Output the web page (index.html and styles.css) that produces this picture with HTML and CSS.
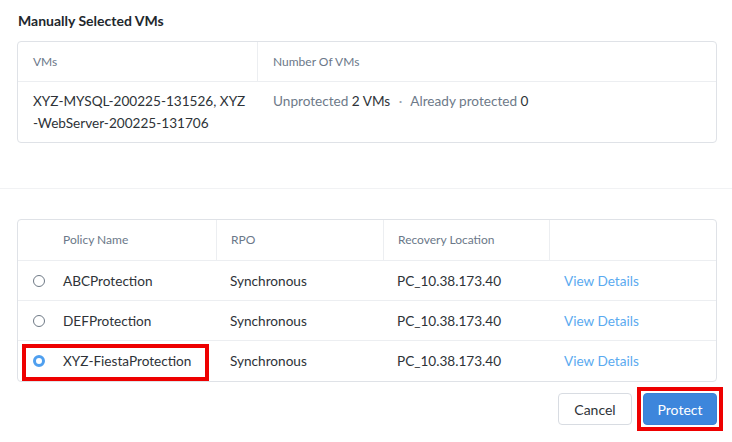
FILE: index.html
```html
<!DOCTYPE html>
<html>
<head>
<meta charset="utf-8">
<link rel="stylesheet" href="styles.css">
</head>
<body>
<div class="page">
  <section class="vms">
    <h2 class="title">Manually Selected VMs</h2>
    <div class="card vm-table">
      <div class="vm-head">
        <div class="th th-first">VMs</div>
        <div class="th th-div">Number Of VMs</div>
      </div>
      <div class="vm-row">
        <div class="td vm-names">XYZ-MYSQL-200225-131526, XYZ<br>-WebServer-200225-131706</div>
        <div class="td vm-count"><span class="muted">Unprotected</span> 2 VMs <span class="dot">·</span> <span class="muted">Already protected</span> 0</div>
      </div>
    </div>
  </section>
  <hr class="sep">
  <section class="policies">
    <div class="card pol-table">
      <div class="pol-row pol-head">
        <div class="th th-name">Policy Name</div>
        <div class="th th-div">RPO</div>
        <div class="th th-div">Recovery Location</div>
        <div class="th th-div"></div>
      </div>
      <div class="pol-row">
        <div class="td name-cell"><span class="radio"></span><span>ABCProtection</span></div>
        <div class="td">Synchronous</div>
        <div class="td">PC_10.38.173.40</div>
        <div class="td"><a class="link">View Details</a></div>
      </div>
      <div class="pol-row">
        <div class="td name-cell"><span class="radio"></span><span>DEFProtection</span></div>
        <div class="td">Synchronous</div>
        <div class="td">PC_10.38.173.40</div>
        <div class="td"><a class="link">View Details</a></div>
      </div>
      <div class="pol-row last">
        <div class="td name-cell highlighted"><span class="radio checked"></span><span>XYZ-FiestaProtection</span></div>
        <div class="td">Synchronous</div>
        <div class="td">PC_10.38.173.40</div>
        <div class="td"><a class="link">View Details</a></div>
      </div>
    </div>
    <div class="actions">
      <button class="btn btn-cancel">Cancel</button>
      <button class="btn btn-primary">Protect</button>
    </div>
  </section>
</div>
</body>
</html>
```

FILE: styles.css
```css
*, *::before, *::after { box-sizing: border-box; }
html, body { margin: 0; padding: 0; background: #fff; }
body {
  font-family: "Lato", "Liberation Sans", sans-serif;
  font-size: 13.6px;
  color: #2e3338;
}
.page { width: 732px; height: 442px; overflow: hidden; }
.vms { padding: 12px 15px 0 17px; }
.title {
  margin: 0 0 11px 1px;
  font-size: 14px;
  font-weight: 700;
  line-height: 18px;
  color: #22272d;
}
.card {
  border: 1px solid #dfe2e7;
  border-radius: 4px;
  background: #fff;
}
.th {
  color: #6b7889;
  font-size: 12px;
  line-height: 16px;
}
.vm-head {
  display: grid;
  grid-template-columns: 239px 1fr;
  height: 40px;
  border-bottom: 1px solid #eceef1;
}
.vm-head .th { display: flex; align-items: center; padding-left: 15px; }
.th-div { border-left: 1px solid #eceef1; }
.vm-row {
  display: grid;
  grid-template-columns: 239px 1fr;
  padding: 8px 0 8px;
  line-height: 22px;
}
.vm-row .td { padding-left: 15px; }
.vm-count { padding-left: 16px !important; }
.muted { color: #6e7a89; }
.dot { color: #9aa3ad; margin: 0 5px; }
.sep {
  margin: 45px 0 0;
  border: 0;
  border-top: 1px solid #f1f2f4;
  height: 0;
}
.policies { padding: 30px 15px 0 17px; }
.pol-row {
  display: grid;
  grid-template-columns: 198px 167px 166px 1fr;
  height: 40px;
  border-bottom: 1px solid #eceef1;
}
.pol-row.last { border-bottom: 0; height: 40px; }
.pol-head { height: 41px; }
.pol-row > div { display: flex; align-items: center; padding-left: 14px; }
.pol-head .th-name { padding-left: 45px; }
.name-cell { gap: 18px; padding-left: 15px !important; position: relative; }
.radio {
  width: 12px; height: 12px;
  border: 1px solid #6f7a86;
  border-radius: 50%;
  flex: none;
}
.radio.checked {
  border: 3.5px solid #4f9fef;
  background: #fff;
}
.highlighted::after {
  content: "";
  position: absolute;
  left: 4px; top: 3px;
  width: 187px; height: 37px;
  border: 4px solid #ee0000;
  pointer-events: none;
}
.link { color: #5aaaf0; text-decoration: none; }
.pol-row > div:last-child { padding-left: 15px; }
.actions {
  display: flex;
  justify-content: flex-end;
  gap: 11px;
  margin-top: 11px;
}
.btn {
  width: 74px; height: 32px;
  border-radius: 4px;
  font-family: inherit;
  font-size: 14px;
  cursor: pointer;
}
.btn-cancel {
  background: #fff;
  border: 1px solid #d8dce2;
  color: #2e3338;
}
.btn-primary {
  position: relative;
  background: #3d86dc;
  border: 1px solid #3a80d4;
  color: #fff;
}
.btn-primary::after {
  content: "";
  position: absolute;
  left: -7px; top: -7px; right: -7px; bottom: -7px;
  border: 4px solid #ee0000;
  pointer-events: none;
}
```
